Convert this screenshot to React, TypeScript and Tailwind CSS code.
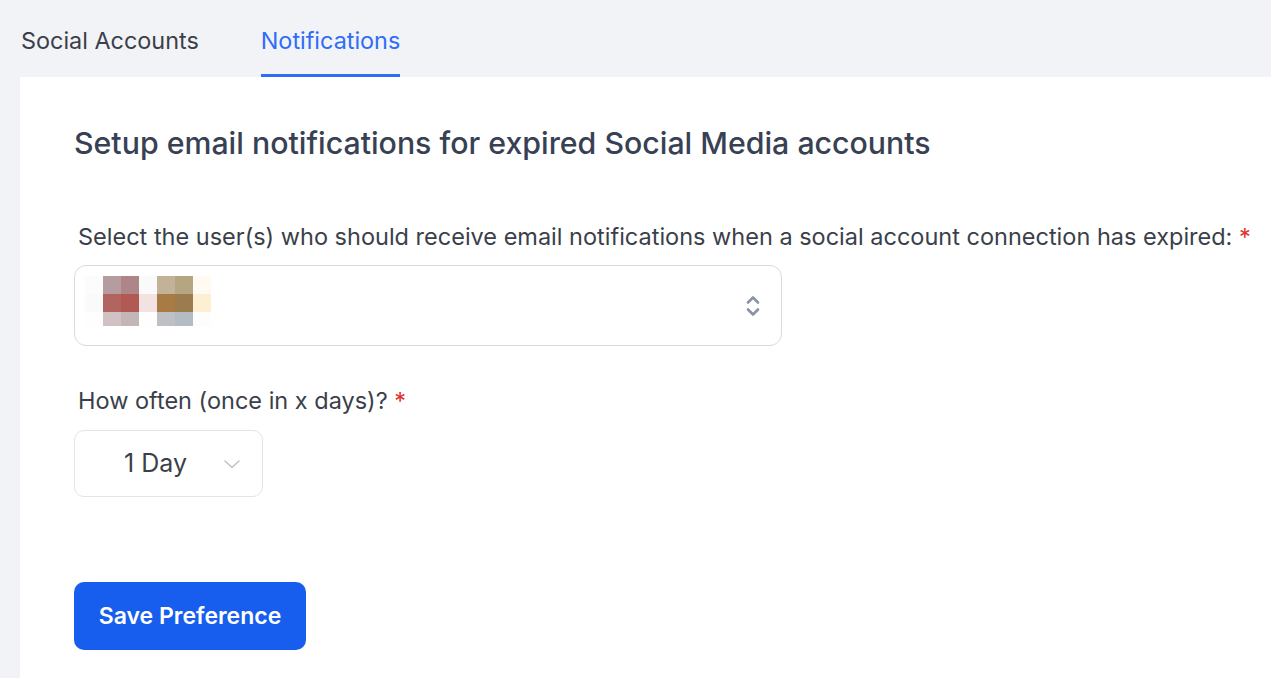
import React from 'react';

const mosaic = [
    ['#fcfcfc', '#b59ca0', '#ae8588', '#fafafa', '#c1b298', '#b5a682', '#fffbf2'],
    ['#fafafa', '#b26461', '#b15a54', '#f3e2e2', '#a87b45', '#9b7c4e', '#fdefd1'],
    ['#fefefe', '#d2c1c2', '#c2b7b6', '#fefefe', '#bfc0c4', '#b3bcc2', '#fdfdfd'],
];

const BlurredAvatar = () => (
    <div className="mt-[10px] grid grid-cols-[repeat(7,18px)] grid-rows-[18px_18px_14px] self-start">
        {mosaic.flat().map((c, i) => (
            // colours come from data, so inline style
            <div key={i} style={{ backgroundColor: c }} />
        ))}
    </div>
);

const App = () => {
    return (
        <div className="min-h-[678px] w-[1271px] overflow-hidden bg-[#f2f3f6] font-['Inter','Liberation_Sans',sans-serif]">
            {/* Tabs */}
            <div className="flex h-[77px] items-stretch gap-[62px] pl-[21px]">
                <button className="flex items-center pt-[4px] text-[23.4px] text-[#3a3f4a]">Social Accounts</button>
                <button className="flex items-center border-b-[3px] border-[#2f6df6] pt-[7px] text-[23.4px] text-[#2f6df6]">
                    Notifications
                </button>
            </div>

            {/* Card */}
            <div className="ml-[20px] h-[601px] bg-white pl-[54px] pt-[48px]">
                <h2 className="whitespace-nowrap text-[30.3px] font-medium leading-[36px] text-[#384154]">
                    Setup email notifications for expired Social Media accounts
                </h2>

                <label className="mt-[61px] block whitespace-nowrap pl-[4px] text-[23.5px] leading-[30px] text-[#3a3f4a]">
                    Select the user(s) who should receive email notifications when a social account connection has expired:{' '}
                    <span className="text-[#e0312b]">*</span>
                </label>

                <div className="mt-[13px] flex h-[81px] w-[708px] items-center justify-between rounded-[12px] border border-[#d8dbe2] pl-[10px] pr-[20px]">
                    <BlurredAvatar />
                    <svg width="16" height="24" viewBox="0 0 16 24" fill="none" stroke="#8a93a3" strokeWidth="2.6" strokeLinecap="round" strokeLinejoin="round">
                        <path d="M3 8.5 L8 3.5 L13 8.5" />
                        <path d="M3 15.5 L8 20.5 L13 15.5" />
                    </svg>
                </div>

                <label className="mt-[40px] block pl-[4px] text-[23.5px] leading-[30px] text-[#3a3f4a]">
                    How often (once in x days)? <span className="text-[#e0312b]">*</span>
                </label>

                <div className="mt-[14px] flex h-[67px] w-[189px] items-center rounded-[10px] border border-[#e1e4ea] pl-[49px]">
                    <span className="text-[25px] text-[#3a3f4a]">1 Day</span>
                    <svg className="ml-[36px]" width="18" height="10" viewBox="0 0 18 10" fill="none" stroke="#b9bfca" strokeWidth="1.4" strokeLinecap="round" strokeLinejoin="round">
                        <path d="M2 2 L9 8.5 L16 2" />
                    </svg>
                </div>

                <button className="mt-[85px] flex h-[68px] w-[232px] items-center justify-center rounded-[10px] bg-[#175eee] text-[23px] font-semibold text-white">
                    Save Preference
                </button>
            </div>
        </div>
    );
};

export default App;
